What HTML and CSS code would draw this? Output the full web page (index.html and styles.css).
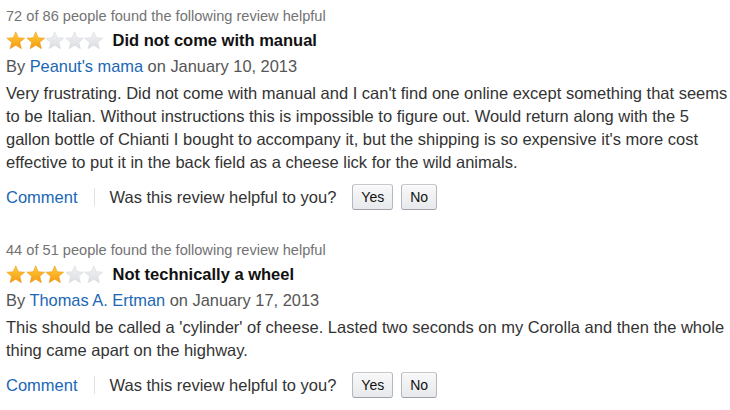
FILE: index.html
```html
<!DOCTYPE html>
<html>
<head>
<meta charset="utf-8">
<link rel="stylesheet" href="styles.css">
</head>
<body>
<svg width="0" height="0" class="defs">
  <defs>
    <linearGradient id="gold" x1="0" y1="0" x2="0" y2="1">
      <stop offset="0" stop-color="#ffce3d"/>
      <stop offset="1" stop-color="#f59a10"/>
    </linearGradient>
    <linearGradient id="grey" x1="0" y1="0" x2="0" y2="1">
      <stop offset="0" stop-color="#f1f2f4"/>
      <stop offset="1" stop-color="#dcdee2"/>
    </linearGradient>
    <symbol id="star" viewBox="0 0 20 19">
      <path d="M10 0.6 L12.6 6.6 L19.2 7.1 L14.2 11.4 L15.8 17.9 L10 14.4 L4.2 17.9 L5.8 11.4 L0.8 7.1 L7.4 6.6 Z"/>
    </symbol>
  </defs>
</svg>

<div class="review">
  <div class="helpful">72 of 86 people found the following review helpful</div>
  <div class="title-row">
    <span class="stars">
      <svg class="star on"><use href="#star"/></svg><svg class="star on"><use href="#star"/></svg><svg class="star off"><use href="#star"/></svg><svg class="star off"><use href="#star"/></svg><svg class="star off"><use href="#star"/></svg>
    </span>
    <span class="title">Did not come with manual</span>
  </div>
  <div class="byline">By <a class="link">Peanut's mama</a> on January 10, 2013</div>
  <p class="body">Very frustrating. Did not come with manual and I can't find one online except something that seems to be Italian. Without instructions this is impossible to figure out. Would return along with the 5 gallon bottle of Chianti I bought to accompany it, but the shipping is so expensive it's more cost effective to put it in the back field as a cheese lick for the wild animals.</p>
  <div class="actions">
    <a class="link comment">Comment</a>
    <span class="sep"></span>
    <span class="question">Was this review helpful to you?</span>
    <button class="btn">Yes</button>
    <button class="btn">No</button>
  </div>
</div>

<div class="review">
  <div class="helpful">44 of 51 people found the following review helpful</div>
  <div class="title-row">
    <span class="stars">
      <svg class="star on"><use href="#star"/></svg><svg class="star on"><use href="#star"/></svg><svg class="star on"><use href="#star"/></svg><svg class="star off"><use href="#star"/></svg><svg class="star off"><use href="#star"/></svg>
    </span>
    <span class="title">Not technically a wheel</span>
  </div>
  <div class="byline">By <a class="link">Thomas A. Ertman</a> on January 17, 2013</div>
  <p class="body">This should be called a 'cylinder' of cheese. Lasted two seconds on my Corolla and then the whole thing came apart on the highway.</p>
  <div class="actions">
    <a class="link comment">Comment</a>
    <span class="sep"></span>
    <span class="question">Was this review helpful to you?</span>
    <button class="btn">Yes</button>
    <button class="btn">No</button>
  </div>
</div>
</body>
</html>
```

FILE: styles.css
```css
html, body {
  margin: 0;
  padding: 0;
  background: #fff;
}
body {
  font-family: "Liberation Sans", Arial, sans-serif;
  color: #333;
  padding: 6px 0 0 6px;
}
.defs {
  position: absolute;
  width: 0;
  height: 0;
}
.review {
  margin-bottom: 29px;
}
.helpful {
  font-size: 14.6px;
  line-height: 20px;
  color: #737373;
}
.title-row {
  display: flex;
  align-items: center;
  height: 24px;
  margin-top: 2px;
}
.stars {
  display: flex;
  margin-right: 9px;
}
.star {
  width: 19.5px;
  height: 19px;
}
.star.on { fill: url(#gold); stroke: #e8900c; stroke-width: 0.5; }
.star.off { fill: url(#grey); stroke: #d2d4d8; stroke-width: 0.5; }
.title {
  font-size: 16.5px;
  font-weight: bold;
  color: #111;
}
.byline {
  font-size: 16.4px;
  line-height: 24px;
  margin-top: 2px;
  color: #555;
}
.link {
  color: #1a67b5;
  text-decoration: none;
}
.body {
  margin: 4px 0 0 0;
  font-size: 16.5px;
  line-height: 23px;
  color: #333;
}
.actions {
  display: flex;
  align-items: center;
  margin-top: 9px;
  height: 28px;
  font-size: 16.5px;
}
.sep {
  width: 1px;
  height: 18px;
  background: #e3e3e3;
  margin: 0 15px 0 16px;
}
.question {
  color: #333;
  margin-right: 16px;
}
.btn {
  font-family: "Liberation Sans", Arial, sans-serif;
  font-size: 14px;
  color: #111;
  height: 26px;
  padding: 0 8px;
  margin-right: 8px;
  border: 1px solid #adb1b8;
  border-color: #c5c7cb #b5b8bd #9ea2a8;
  border-radius: 3px;
  background: linear-gradient(#f8f8f9, #e7e9ec);
  box-shadow: 0 1px 0 rgba(255,255,255,0.6) inset;
}
```
